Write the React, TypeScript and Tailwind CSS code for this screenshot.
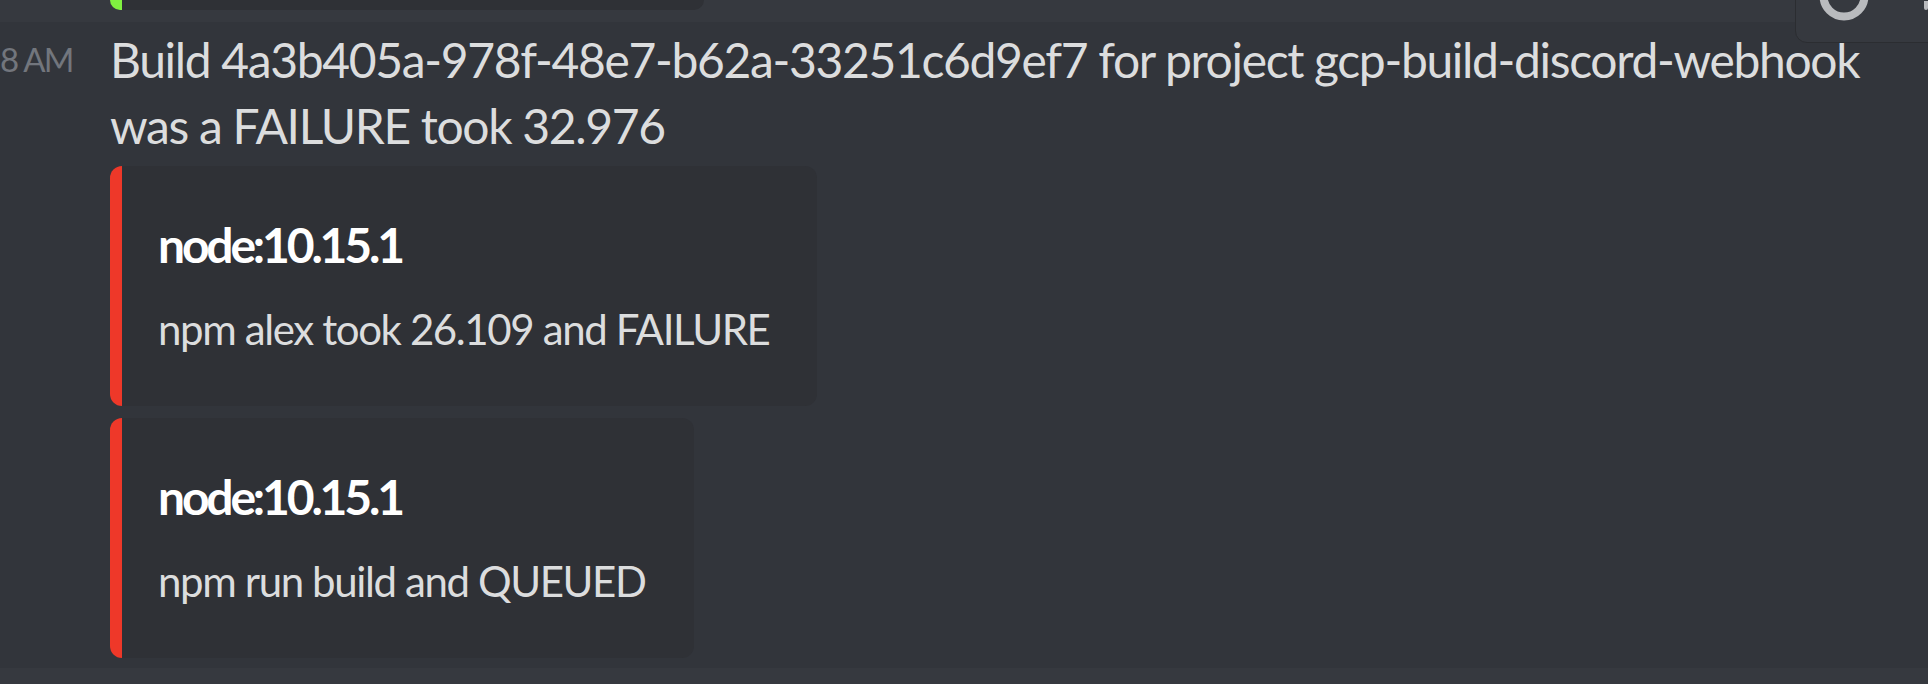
import React from "react";

function Embed({ title, desc }: { title: string; desc: string }) {
  return (
    <div className="w-fit rounded-[12px] border-l-[12px] border-[#ee3829] bg-[#2f3136] pl-[36px] pr-[48px] pt-[46px] pb-[50px]">
      <div className="whitespace-nowrap text-[48px] leading-[66px] font-bold tracking-[-0.066em] text-white">{title}</div>
      <div className="mt-[24px] whitespace-nowrap text-[42px] leading-[54px] tracking-[-0.033em] text-[#dcddde]">{desc}</div>
    </div>
  );
}

export default function App() {
  return (
    <div className="relative h-[684px] w-full overflow-hidden bg-[#36393f] font-['Lato','Noto_Sans',sans-serif]">
      {/* previous message tail */}
      <div className="h-[22px] pl-[110px]">
        <div className="h-[10px] w-[594px] rounded-b-[12px] border-l-[12px] border-[#80f040] bg-[#2f3136]" />
      </div>

      {/* hovered message */}
      <div className="flex bg-[#32353b] pt-[5px] pb-[10px]">
        <div className="w-[110px] shrink-0">
          <div className="-mt-[1px] whitespace-nowrap text-[33px] leading-[66px] tracking-[-0.05em] text-[#72767d]">8 AM</div>
        </div>
        <div className="flex min-w-0 flex-col">
          <div className="text-[48px] leading-[66px] tracking-[-0.028em] text-[#dcddde]">
            <div className="whitespace-nowrap">
              Build 4a3b405a-978f-48e7-b62a-33251c6d9ef7 for project gcp-build-discord-webhook
            </div>
            <div className="whitespace-nowrap">was a FAILURE took 32.976</div>
          </div>
          <div className="mt-[7px] flex flex-col gap-[12px]">
            <Embed title="node:10.15.1" desc="npm alex took 26.109 and FAILURE" />
            <Embed title="node:10.15.1" desc="npm run build and QUEUED" />
          </div>
        </div>
      </div>

      {/* hover toolbar */}
      <div className="absolute right-[-12px] top-[-10px] h-[53px] w-[145px] rounded-bl-[12px] border border-[#2b2d31] bg-[#36393f]">
        <svg className="absolute left-[23px] top-[-20px]" width="50" height="50" viewBox="0 0 50 50">
          <circle cx="25" cy="25" r="20.5" fill="none" stroke="#b9bbbe" strokeWidth="8" />
        </svg>
        <div className="absolute left-[128px] top-[10px] h-[9px] w-[4px] rounded-b-[2px] bg-[#b9bbbe]" />
      </div>
    </div>
  );
}
